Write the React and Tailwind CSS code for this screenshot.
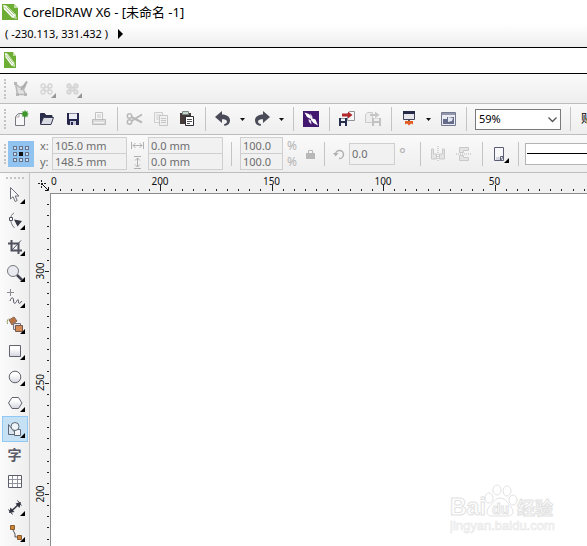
import React from "react";

const UI = "font-['Noto_Sans','Noto_Sans_CJK_SC',sans-serif]";

function Svg({ w = 20, h = 20, className = "", children }) {
  return (
    <svg width={w} height={h} viewBox={`0 0 ${w} ${h}`} fill="none" aria-hidden="true" className={`block shrink-0 ${className}`}>
      {children}
    </svg>
  );
}

function Tool({ label, children }) {
  return (
    <button type="button" aria-label={label} className="flex h-[26px] w-[26px] shrink-0 items-center justify-center">
      {children}
    </button>
  );
}

function Caret({ label }) {
  return (
    <button type="button" aria-label={label} className="flex h-[26px] w-[13px] shrink-0 items-center justify-center">
      <Svg w={5} h={3}><path d="M0 0h5L2.5 3z" fill="#111" /></Svg>
    </button>
  );
}

function Sep() {
  return (
    <div className="flex w-[10px] shrink-0 justify-center">
      <div className="h-6 w-px bg-[#c4c4c8]" />
    </div>
  );
}

function Grip() {
  return (
    <div className="flex w-2 shrink-0 justify-end pr-[2px]">
      <div className="h-5 w-0 border-l-2 border-dotted border-[#c4c4c4]" />
    </div>
  );
}

function Logo({ w, h }) {
  return (
    <svg width={w} height={h} viewBox="0 0 16 16" preserveAspectRatio="none" aria-hidden="true" className="shrink-0">
      <path d="M0 0h12l4 4v12H0z" fill="#6fae35" />
      <path d="M12 0v4h4z" fill="#c5dfac" />
      <path d="M1.200 1l3.600.8 8.600 8.400 1.300 4.600-4.800-1.400L2 5.200z" fill="#fff" />
      <path d="M2.500 3l8.500 8.800M4.500 2.500l8 8" stroke="#7fb74c" strokeWidth=".8" />
      <path d="M11.400 13.200l1.800-2 1.200 3.300z" fill="#b7d79a" />
    </svg>
  );
}

function NewIcon() {
  return (
    <Svg>
      <path d="M4.500 7.500l3-3h6v12h-9z" fill="#f8f8fa" stroke="#77777f" />
      <path d="M4.500 8h3.500V4.500" stroke="#aaa" />
      <circle cx="14" cy="5" r="2.600" fill="#3f962a" />
      <path d="M14 1.500v7M10.500 5h7M11.500 2.500l5 5M16.500 2.500l-5 5" stroke="#3f962a" strokeWidth="1.200" />
    </Svg>
  );
}

function OpenIcon() {
  return (
    <Svg>
      <path d="M3.500 15V4.500h4l1.500 2h6V9" fill="#292d49" stroke="#292d49" />
      <path d="M3.500 15.500L6.500 8.500h10l-2.500 7z" fill="#d9dbe3" stroke="#36394f" />
    </Svg>
  );
}

function SaveIcon() {
  return (
    <Svg>
      <path d="M4 4h12v12H5l-1-1z" fill="#25264b" />
      <path d="M6 4.500h8V10H6z" fill="#edeef5" />
      <path d="M7 12h6v4H7z" fill="#c8cbdc" />
      <path d="M8 13h2v3H8z" fill="#25264b" />
    </Svg>
  );
}

function PrintIcon() {
  return (
    <Svg>
      <path d="M6.500 10V3.500h7V10" fill="#f7f7f7" stroke="#c2c2c2" />
      <path d="M3.500 10.500h13v5h-13z" fill="#dadada" stroke="#bdbdbd" />
      <path d="M8 6h4M8 8h4" stroke="#c6c6c6" />
      <path d="M5 13.500h10" stroke="#f6f6f6" />
    </Svg>
  );
}

function CutIcon() {
  return (
    <Svg>
      <path d="M6.500 8L17 13.500M6.500 12L17 5.500" stroke="#b9b9b9" strokeWidth="2" />
      <circle cx="4.500" cy="7" r="2.200" stroke="#b9b9b9" strokeWidth="1.500" />
      <circle cx="4.500" cy="13" r="2.200" stroke="#b9b9b9" strokeWidth="1.500" />
    </Svg>
  );
}

function CopyIcon() {
  return (
    <Svg>
      <path d="M3.500 3.500h8v10h-8z" fill="#f4f4f4" stroke="#cdcdcd" />
      <path d="M5 6h5M5 8h5M5 10h5" stroke="#d0d0d0" />
      <path d="M8.500 6.500h8v10h-8z" fill="#f0f0f0" stroke="#c6c6c6" />
      <path d="M10 9.500h5M10 11.500h5M10 13.500h5" stroke="#c6c6c6" />
    </Svg>
  );
}

function PasteIcon() {
  return (
    <Svg>
      <path d="M3 4h11v11H3z" fill="#453b38" />
      <path d="M5.500 2.500h6v3h-6z" fill="#c7d5cf" stroke="#7d8985" />
      <path d="M8.500 7.500h8v9h-8z" fill="#fff" stroke="#2d2d33" />
      <path d="M10 10.500h5M10 12.500h5M10 14.500h3" stroke="#555" />
    </Svg>
  );
}

function UndoIcon({ flip = false }) {
  return (
    <Svg>
      <g transform={flip ? "translate(20 0) scale(-1 1)" : undefined}>
        <path d="M2 8L9 2v3.500c5 0 8 2.500 8 6 0 3-2 5-5.500 5.500L11 15c2.300-.4 3.200-1.500 2.900-2.800C13.500 10.800 12 10.300 9 10.300V14z" fill="#4a4b58" />
      </g>
    </Svg>
  );
}

function ImportIcon() {
  return (
    <Svg>
      <path d="M10.500 4.500l2-2h5v9h-7z" fill="#f7f7f8" stroke="#92929b" />
      <path d="M5 4.500h6V2.500L15.500 6 11 9.500V7.500H5z" fill="#b3282c" />
      <path d="M2 9h8v8H2z" fill="#26304e" />
      <path d="M4 9.500h4V12H4zM4 14h4v3H4z" fill="#f2f3f6" />
    </Svg>
  );
}

function ExportIcon() {
  return (
    <Svg>
      <path d="M2.500 5.500l2-2h5v10h-7z" fill="#ededed" stroke="#cbcbcb" />
      <path d="M7 5h5V2.500L16.500 6 12 9V7H7z" fill="#c6c6c6" />
      <path d="M9 9h9v8H9z" fill="#c2c2c2" />
      <path d="M11 9.500h5V12h-5zM11 14h5v3h-5z" fill="#f0f0f0" />
    </Svg>
  );
}

function CorelIcon() {
  return (
    <Svg w={16} h={16}>
      <path d="M0 0h16v16H0z" fill="#43176f" />
      <path d="M1.500 1.500L6 3l2 2.500L7.500 8 4 6z" fill="#fff" />
      <path d="M7.500 2.500l2 3.500-.5 3-2-2z" fill="#e9e0f2" />
      <path d="M8 7l4.500 1.500L15 14.500 10.500 12 8 9z" fill="#fff" />
      <path d="M5.500 8L8 9.500l.5 4L6 11z" fill="#e9e0f2" />
    </Svg>
  );
}

function LaunchIcon() {
  return (
    <Svg>
      <path d="M4.500 3.500h11v7h-11z" fill="#e6e7ea" stroke="#41435a" />
      <path d="M4 2h12v3H4z" fill="#252a49" />
      <path d="M6 12h8v3.500l-2-1-2 2-2-2-2 1z" fill="#e35c23" />
      <path d="M9 11h2v1H9z" fill="#555" />
    </Svg>
  );
}

function WelcomeIcon() {
  return (
    <Svg>
      <path d="M3.500 3.500h14v13h-14z" fill="#ebecf2" stroke="#757990" />
      <path d="M4 4h13v2H4z" fill="#9297ae" />
      <path d="M5 10h4V8h7v7H5z" fill="#646b8b" />
      <path d="M10 8l5 1-1 3-4 1z" fill="#e6e8f1" />
    </Svg>
  );
}

function StandardBar() {
  return (
    <div role="toolbar" aria-label="Standard" className="flex h-[31px] shrink-0 items-center overflow-hidden border-b border-[#bdbdc0] bg-gradient-to-b from-[#f9f9f9] to-[#eeeeee]">
      <Grip />
      <Tool label="New"><NewIcon /></Tool>
      <Tool label="Open"><OpenIcon /></Tool>
      <Tool label="Save"><SaveIcon /></Tool>
      <Tool label="Print"><PrintIcon /></Tool>
      <Sep />
      <Tool label="Cut"><CutIcon /></Tool>
      <Tool label="Copy"><CopyIcon /></Tool>
      <Tool label="Paste"><PasteIcon /></Tool>
      <Sep />
      <Tool label="Undo"><UndoIcon /></Tool>
      <Caret label="Undo list" />
      <Tool label="Redo"><UndoIcon flip /></Tool>
      <Caret label="Redo list" />
      <Sep />
      <Tool label="Corel Connect"><CorelIcon /></Tool>
      <Sep />
      <Tool label="Import"><ImportIcon /></Tool>
      <Tool label="Export"><ExportIcon /></Tool>
      <Sep />
      <Tool label="Application launcher"><LaunchIcon /></Tool>
      <Caret label="Launcher list" />
      <Tool label="Welcome screen"><WelcomeIcon /></Tool>
      <Sep />
      <div className="relative ml-1 shrink-0">
        <select aria-label="Zoom level" defaultValue="59%" className="block h-[21px] w-[86px] appearance-none border border-[#7a7a7a] bg-white pl-[3px] text-[11px] leading-[18px] text-black">
          <option>59%</option>
        </select>
        <Svg w={9} h={6} className="pointer-events-none absolute right-1 top-2"><path d="M.5.500l4 4 4-4" stroke="#555" strokeWidth="1.300" /></Svg>
      </div>
      <div className="ml-1 flex"><Sep /></div>
      <button type="button" className="ml-1 shrink-0 whitespace-nowrap pl-[2px] text-xs text-black">贴齐</button>
    </div>
  );
}

const field = "block h-[17px] border border-[#cfcfcf] bg-[#f1f1f1] pl-[2px] text-[11px] leading-4 text-[#6d6d6d]";

function Pair({ a, b, width, labels }) {
  return (
    <div className="flex shrink-0 flex-col">
      <input aria-label={labels[0]} defaultValue={a} className={`${field} ${width}`} />
      <input aria-label={labels[1]} defaultValue={b} className={`${field} ${width} -mt-px`} />
    </div>
  );
}

function PropertyBar() {
  return (
    <div role="toolbar" aria-label="Property bar" className="flex h-[38px] shrink-0 items-center overflow-hidden border-b border-[#bdbdc0] bg-gradient-to-b from-[#fafafa] to-[#eeeeee] text-xs text-[#6d6d6d]">
      <Grip />
      <button type="button" aria-label="Object origin" className="flex h-[26px] w-[26px] shrink-0 items-center justify-center bg-[#90c3f0]">
        <Svg w={16} h={16}>
          {[0, 6, 12].map((x) => [0, 6, 12].map((y) => (
            <rect key={`${x}-${y}`} x={x + 0.5} y={y + 0.5} width="3" height="3" stroke={x === 6 && y === 6 ? "#111" : "#68738a"} fill={x === 6 && y === 6 ? "#111" : "#c9e1f7"} />
          )))}
        </Svg>
      </button>
      <div className="flex w-[18px] shrink-0 flex-col pl-[6px] text-[11px] leading-4">
        <span>x:</span>
        <span>y:</span>
      </div>
      <Pair a="105.0 mm" b="148.5 mm" width="w-[75px]" labels={["x", "y"]} />
      <div className="flex w-[21px] shrink-0 flex-col items-center gap-1">
        <Svg w={13} h={13}><path d="M.5 3v7M12.500 3v7M2 6.500h9M4.500 4L2 6.500 4.500 9M8.500 4L11 6.500 8.500 9" stroke="#b0b0b0" /></Svg>
        <Svg w={13} h={13}><path d="M3 .5h7M3 12.500h7M6.500 2v9M4 4.500L6.500 2 9 4.500M4 8.500L6.500 11 9 8.500" stroke="#b0b0b0" /></Svg>
      </div>
      <Pair a="0.0 mm" b="0.0 mm" width="w-[75px]" labels={["Width", "Height"]} />
      <div className="ml-[3px] mr-1 flex"><Sep /></div>
      <Pair a="100.0" b="100.0" width="w-[43px]" labels={["Horizontal scale", "Vertical scale"]} />
      <div className="flex w-4 shrink-0 flex-col pl-1 leading-4 text-[#b4b4b4]">
        <span>%</span>
        <span>%</span>
      </div>
      <button type="button" aria-label="Lock ratio" className="flex h-[26px] w-5 shrink-0 items-center justify-end pr-1">
        <Svg w={9} h={12}><path d="M0 5h9v6H0z" fill="#b8b8b8" /><path d="M2.500 5V2.500h4V5" stroke="#b8b8b8" /></Svg>
      </button>
      <Sep />
      <div className="flex w-5 shrink-0 justify-end pr-1">
        <Svg w={12} h={12}><path d="M2.500 6a4 4 0 1 1 3.500 4.500" stroke="#b0b0b0" strokeWidth="1.500" /><path d="M0 5h5.500L2.700 8.500z" fill="#b0b0b0" /></Svg>
      </div>
      <input aria-label="Rotation" defaultValue="0.0" className="h-[22px] w-[46px] shrink-0 border border-[#cfcfcf] bg-[#f1f1f1] pl-[2px] text-[11px] text-[#6d6d6d]" />
      <span className="w-5 shrink-0 pl-1 text-base leading-4 text-[#b4b4b4]">°</span>
      <Sep />
      <Tool label="Mirror horizontally">
        <Svg w={16} h={16}><path d="M1.500 3v10h5V8h-3V3zM14.500 3v10h-5V8h3V3z" fill="#e4e4e4" stroke="#c9c9c9" /><path d="M8 0v16" stroke="#b5b5b5" strokeDasharray="1 1" /></Svg>
      </Tool>
      <Tool label="Mirror vertically">
        <Svg w={16} h={16}><path d="M3.500 6.500v-5h9v3h-5v2zM3.500 9.500v5h9v-3h-5v-2z" fill="#e4e4e4" stroke="#c9c9c9" /><path d="M0 8h16" stroke="#b5b5b5" strokeDasharray="1 1" /></Svg>
      </Tool>
      <Sep />
      <Tool label="Wrap text">
        <Svg w={18} h={18}><path d="M3.500 2.500h9v13h-9z" fill="#f8f8fa" stroke="#5b5d74" /><path d="M5 12h4v3H5z" fill="#d5d6df" /><path d="M12.500 11.500h-3v4z" fill="#fff" stroke="#5b5d74" /><path d="M18 13v5h-5z" fill="#000" /></Svg>
      </Tool>
      <Sep />
      <button type="button" aria-label="Line style" className="ml-[2px] flex h-[22px] min-w-[60px] flex-1 items-center border border-r-0 border-[#b4b4b4] bg-white pl-px">
        <span className="h-px w-full bg-black" />
      </button>
    </div>
  );
}

const ink = "#50515f";
const tools = [
  ["Pick", <path key="p" d="M5.500 2.500v11.500l2.500-2.300 2.200 4.800 2-1-2-4.500h3.800z" fill="#f8f8fa" stroke="#6c6e7c" />],
  ["Shape", <g key="p"><path d="M9 2C4.500 4 4.500 12 9.500 17" stroke="#777984" /><path d="M4.500 6.500h3v3h-3z" fill="#fff" stroke={ink} /><path d="M9 8.500l8 1.500-4.500 5.500z" fill="#333541" /></g>],
  ["Crop", <g key="p"><path d="M6.500 3v10.500H17M3 6.500h10.500V17" stroke={ink} strokeWidth="2" /><path d="M6 14L16 3.500" stroke={ink} /></g>],
  ["Zoom", <g key="p"><circle cx="8" cy="8" r="5.500" fill="#e9ebf0" stroke="#757782" /><path d="M12 12l5 5" stroke="#444653" strokeWidth="2.500" /></g>],
  ["Freehand", <g key="p"><path d="M5.500 0v7M2 3.500h7" stroke="#8a8b92" /><path d="M5 12c1-4 3.500-4 3.500-1s1 5 3 1.500 2-1.500 2 .5 2 2 3-1" stroke={ink} /></g>],
  ["Smart fill", <g key="p"><path d="M4 5l5-3 3 4-5 4z" fill="#b87445" stroke="#8a654c" /><path d="M4 3.500C2 5 2 7 2.500 9" stroke="#996" /><path d="M8.500 8.500h7v6h-7z" fill="#e1e2e8" stroke="#73747f" /><path d="M10.500 10.500h7v6h-7z" fill="#d58a55" stroke="#76584b" /></g>],
  ["Rectangle", <path key="p" d="M4.500 4.500h11v11h-11z" fill="url(#shapeFill)" stroke="#62636e" />],
  ["Ellipse", <circle key="p" cx="10" cy="10" r="5.800" fill="url(#shapeFill)" stroke="#62636e" />],
  ["Polygon", <path key="p" d="M3.500 10l3.500-5.500h6.500L17 10l-3.500 5.500H7z" fill="url(#shapeFill)" stroke="#62636e" />],
  ["Basic shapes", <g key="p"><path d="M3.500 5.500l8 10h-8z" fill="#dbe5ed" stroke="#5c6876" /><path d="M9.500 10.500h6v6h-6z" fill="#f4f6f8" stroke="#5c6876" /><circle cx="10" cy="7.500" r="4" fill="#eff4f8" stroke="#5c6876" /></g>],
  ["Text", null],
  ["Table", <g key="p"><path d="M3.500 4.500h13v12h-13z" fill="#fff" stroke="#5c5d68" /><path d="M7.500 5v11M12.500 5v11M4 8.500h12M4 12.500h12" stroke="#92939e" /></g>],
  ["Dimension", <g key="p"><path d="M6 14.500l8-7.500" stroke="#333541" strokeWidth="1.500" /><path d="M4 16l1.500-5.500 4 4.500zM16 5l-1.500 6-4-4.500z" fill="#333541" /><path d="M3.500 12.500l4 5M12.500 3.500l4 5" stroke="#333541" /></g>],
  ["Connector", <g key="p"><path d="M7 5l3 6v3h4" stroke="#555" /><path d="M5.500 2.500h4v4h-4zM12.500 12.500h4v4h-4z" fill="#cc843b" stroke="#8a5b2c" /></g>],
];
const noFlyout = ["Text", "Table"];

function Toolbox() {
  return (
    <nav aria-label="Toolbox" className="flex w-[30px] shrink-0 flex-col items-center border-r border-[#c6c6c8] bg-gradient-to-r from-[#fbfbfb] to-[#eeeeee]">
      <div className="flex h-[9px] shrink-0 items-center">
        <div className="w-[18px] border-t-2 border-dotted border-[#c4c4c4]" />
      </div>
      {tools.map(([name, art]) => (
        <button
          key={name}
          type="button"
          aria-label={name}
          className={`flex h-[26px] w-[26px] shrink-0 items-center justify-center border ${name === "Basic shapes" ? "border-[#90c8f6] bg-[#c6e0f4]" : "border-transparent"}`}
        >
          {art ? (
            <Svg>
              <defs>
                <linearGradient id="shapeFill" x2="0" y2="1"><stop offset=".3" stopColor="#fff" /><stop offset="1" stopColor="#d3d4de" /></linearGradient>
              </defs>
              {art}
              {!noFlyout.includes(name) && <path d="M20 14v5h-5z" fill="#000" />}
            </Svg>
          ) : (
            <span className="text-sm font-bold leading-6 text-[#5a5b66]">字</span>
          )}
        </button>
      ))}
    </nav>
  );
}

const STEP = 11.15;

function ticks(first, start, count) {
  return Array.from({ length: count }, (_, i) => {
    const n = i - start;
    return { at: Math.round(first + n * STEP), major: n % 10 === 0, n };
  });
}

function TopRuler() {
  return (
    <svg aria-label="Horizontal ruler" className="block h-5 min-w-0 flex-1">
      {ticks(110, 9, 120).map((t) => (
        <rect key={t.n} x={t.at} y={t.major ? 12 : 16} width="1" height={t.major ? 6 : 2} fill="#222" />
      ))}
      <text x="1" y="12" fontSize="10" fill="#111">0</text>
      {[200, 150, 100, 50, 0].map((v, i) => (
        <text key={v} x={110 + i * 111.5} y="12" fontSize="10" textAnchor="middle" fill="#111">{v}</text>
      ))}
    </svg>
  );
}

function SideRuler() {
  return (
    <svg aria-label="Vertical ruler" className="block h-full w-5">
      {ticks(77, 6, 90).map((t) => (
        <rect key={t.n} x={t.major ? 15 : 17} y={t.at} width={t.major ? 4 : 2} height="1" fill="#222" />
      ))}
      {[300, 250, 200, 150].map((v, i) => (
        <text key={v} transform={`translate(14 ${77 + i * 111.5}) rotate(-90)`} fontSize="10" textAnchor="middle" fill="#111">{v}</text>
      ))}
    </svg>
  );
}

function Watermark() {
  return (
    <Svg w={110} h={54} className="font-['Liberation_Sans','Noto_Sans_CJK_SC',sans-serif]">
      <g fill="#fff" stroke="#e2e2e2" strokeWidth="1">
        <text x="0" y="31" fontSize="23" fontWeight="bold">Bai</text>
        <ellipse cx="39" cy="14" rx="4" ry="5" />
        <ellipse cx="47" cy="6" rx="4" ry="5" />
        <ellipse cx="57" cy="7" rx="4" ry="5" />
        <ellipse cx="63" cy="16" rx="4" ry="5" />
        <path d="M50 14c5 0 8 5 11 9 4 5 2 10-6 9H44c-7 1-9-4-5-9 4-4 6-9 11-9z" />
        <text x="42" y="30" fontSize="14" fontWeight="bold">du</text>
        <text x="67" y="31" fontSize="18" fontWeight="bold">经验</text>
      </g>
      <text x="0" y="46" fontSize="13" fill="#fafafa" stroke="#e8e8e8" strokeWidth=".6">jingyan.baidu.com</text>
    </Svg>
  );
}

function NodeBar() {
  return (
    <div role="toolbar" aria-label="Shape editing" className="flex h-[30px] shrink-0 items-center border-b border-[#bdbdc0] bg-gradient-to-b from-[#fafafa] to-[#eeeeee]">
      <Grip />
      <Tool label="Edit nodes">
        <Svg><path d="M4.500 4.500l4 4 6-2-2 4 2 5h-8z" fill="#e2e2e2" stroke="#b8b8b8" strokeWidth="1.500" /><path d="M3 3h3v3H3zM5 14h3v3H5zM13 14h3v3h-3z" fill="#b8b8b8" /><path d="M10 11l6-8.500" stroke="#aaa" strokeWidth="2" /></Svg>
      </Tool>
      {["Smear", "Roughen"].map((n, i) => (
        <Tool key={n} label={n}>
          <Svg>
            <g fill={i ? "#dedede" : "#f2f2f2"} stroke="#d4d4d4" strokeWidth="1.300">
              <circle cx="6" cy="7" r="2" /><circle cx="13" cy="7" r="2" /><circle cx="6" cy="13" r="2" /><circle cx="13" cy="13" r="2" /><circle cx="9.500" cy="10" r="2" />
            </g>
            <path d="M19 14v5h-5z" fill="#969696" />
          </Svg>
        </Tool>
      ))}
    </div>
  );
}

export default function App() {
  return (
    <div className={`flex h-screen w-full flex-col overflow-hidden bg-[#f0f0f0] text-black ${UI}`}>
      <header className="shrink-0">
        <div className="flex h-6 items-center gap-[5px] bg-white pb-px pl-[2px]">
          <Logo w={16} h={16} />
          <h1 className="whitespace-nowrap text-[13px] leading-5">CorelDRAW X6 - [未命名 -1]</h1>
        </div>
        <div className="flex h-6 items-center gap-[10px] border-b border-black bg-gradient-to-b from-white to-[#eeeeee] pb-1 pl-[5px]">
          <span className="whitespace-nowrap text-[11px] leading-5">( -230.113, 331.432 )</span>
          <button type="button" aria-label="Show more"><Svg w={5} h={10}><path d="M0 0l5 5-5 5z" fill="#000" /></Svg></button>
        </div>
        <div className="flex h-[26px] items-center border-b border-black bg-white pb-px pl-1">
          <Logo w={12} h={16} />
        </div>
      </header>
      <NodeBar />
      <StandardBar />
      <PropertyBar />
      <div className="flex min-h-0 flex-1">
        <Toolbox />
        <main className="flex min-w-0 flex-1 flex-col">
          <div className="flex h-[21px] shrink-0 bg-[#f1f1f1]">
            <div className="flex w-5 shrink-0 items-center justify-end">
              <Svg w={12} h={12} className="mt-1">
                <path d="M0 3.500h8M3.500 0v8" stroke="#222" strokeDasharray="2 1" />
                <path d="M4 4l6 6M7 10.500h3.500V7" stroke="#111" />
              </Svg>
            </div>
            <div className="flex min-w-0 flex-1 border-b border-[#8c8c8c]"><TopRuler /></div>
          </div>
          <div className="flex min-h-0 flex-1">
            <div className="w-[21px] shrink-0 border-r border-[#8c8c8c] bg-[#f1f1f1]"><SideRuler /></div>
            <section aria-label="Drawing page" className="flex min-w-0 flex-1 items-end justify-end bg-white pb-2 pr-[27px]">
              <Watermark />
            </section>
          </div>
        </main>
      </div>
    </div>
  );
}
